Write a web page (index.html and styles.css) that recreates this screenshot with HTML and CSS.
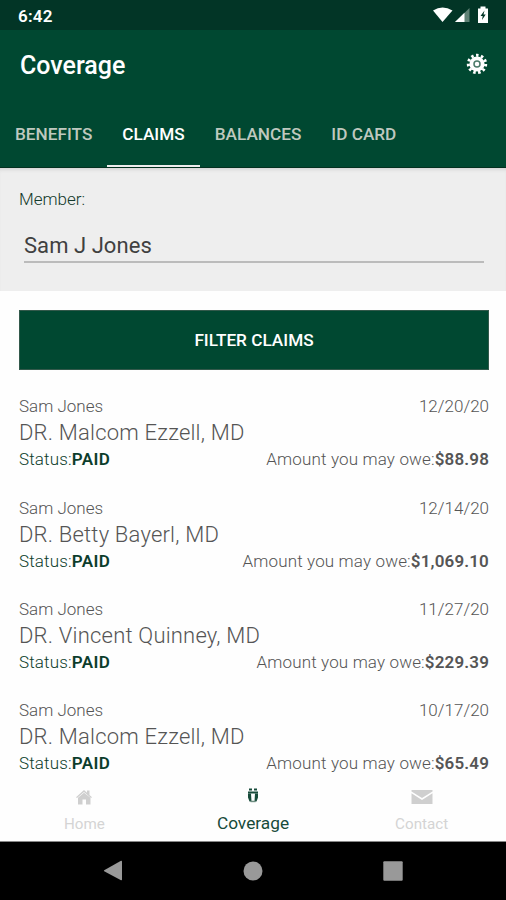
FILE: index.html
```html
<!DOCTYPE html>
<html lang="en">
<head>
    <meta charset="UTF-8">
    <meta name="viewport" content="width=device-width, initial-scale=1.0">
    <title>Coverage</title>
    <link rel="stylesheet" href="styles.css">
</head>
<body>
    <div class="status-bar">
        <span class="time">6:42</span>
        <svg class="status-icons" width="58" height="18" viewBox="0 0 58 18">
            <path d="M1 4.500Q10.500 -1.500 20.500 4.500L10.500 16Z" fill="#fff"/>
            <path d="M37.500 2V16H23Z" fill="#5f8175"/>
            <path d="M32.500 6.800V16H23Z" fill="#fff"/>
            <path d="M46 2.500h2.500V0.500h5v2h2.500V17H46Z" fill="#fff"/>
            <path d="M52.500 4.500l-4 5.500h2.200l-.7 4 3.700-5.500h-2.200Z" fill="#023526"/>
        </svg>
    </div>

    <header class="header">
        <h1>Coverage</h1>
        <svg class="gear" width="22" height="22" viewBox="-11 -11 22 22">
            <circle r="7.600" fill="#fff"/>
            <circle r="8.700" fill="none" stroke="#fff" stroke-width="3" stroke-dasharray="2.500 2.470"/>
            <circle r="3" fill="none" stroke="#4b7a69" stroke-width="1.500"/>
        </svg>
    </header>

    <nav class="tabs">
        <a class="tab">BENEFITS</a>
        <a class="tab active">CLAIMS</a>
        <a class="tab">BALANCES</a>
        <a class="tab">ID CARD</a>
    </nav>

    <section class="member">
        <label class="member-label">Member:</label>
        <div class="member-select">Sam J Jones</div>
    </section>

    <main class="claims">
        <button class="filter">FILTER CLAIMS</button>

        <article class="claim">
            <div class="row"><span>Sam Jones</span><span class="date">12/20/20</span></div>
            <h2>DR. Malcom Ezzell, MD</h2>
            <div class="row"><span class="status">Status:<b>PAID</b></span><span class="amount">Amount you may owe:<b>$88.98</b></span></div>
        </article>
        <article class="claim">
            <div class="row"><span>Sam Jones</span><span class="date">12/14/20</span></div>
            <h2>DR. Betty Bayerl, MD</h2>
            <div class="row"><span class="status">Status:<b>PAID</b></span><span class="amount">Amount you may owe:<b>$1,069.10</b></span></div>
        </article>
        <article class="claim">
            <div class="row"><span>Sam Jones</span><span class="date">11/27/20</span></div>
            <h2>DR. Vincent Quinney, MD</h2>
            <div class="row"><span class="status">Status:<b>PAID</b></span><span class="amount">Amount you may owe:<b>$229.39</b></span></div>
        </article>
        <article class="claim">
            <div class="row"><span>Sam Jones</span><span class="date">10/17/20</span></div>
            <h2>DR. Malcom Ezzell, MD</h2>
            <div class="row"><span class="status">Status:<b>PAID</b></span><span class="amount">Amount you may owe:<b>$65.49</b></span></div>
        </article>
    </main>

    <nav class="bottom-nav">
        <a class="nav-item">
            <svg width="24" height="18" viewBox="0 0 24 18">
                <path d="M4 9.200L12 2l3 2.700V2.500h2.500v4.400L20 9.200l-1 .8-7-6-7 6Z" fill="#cfcfcf"/>
                <path d="M6 9.800l6-5 6.500 5V16.500H14v-5h-3.500v5H6Z" fill="#cfcfcf"/>
            </svg>
            <span>Home</span>
        </a>
        <a class="nav-item current">
            <svg width="24" height="18" viewBox="0 0 24 18">
                <path d="M8 .5h3v2H8ZM13 .5h3v2h-3ZM7 3.500h10v2H7Z" fill="#174b3a"/>
                <path d="M7 5.500h3l.5 8H8.500L7 9.500ZM17 5.500h-3l-.5 8h2l1.500-4Z" fill="#174b3a"/>
                <path d="M9.500 12.700h5v1.500h-5Z" fill="#6d8d80"/>
            </svg>
            <span>Coverage</span>
        </a>
        <a class="nav-item">
            <svg width="24" height="18" viewBox="0 0 24 18">
                <path d="M1.500 2h21v1.500L12 10 1.500 3.500Z" fill="#cfcfcf"/>
                <path d="M1.500 5.300L12 12l10.500-6.700V16h-21Z" fill="#cfcfcf"/>
            </svg>
            <span>Contact</span>
        </a>
    </nav>

    <div class="system-bar">
        <svg width="20" height="22" viewBox="0 0 20 22"><path d="M1.200 10.200L18 .8q1-.3 1 .7v18q0 1-1 .7L1.200 11.200q-.6-.5 0-1Z" fill="#999"/></svg>
        <svg width="20" height="20" viewBox="0 0 20 20"><circle cx="10" cy="10" r="9.500" fill="#999"/></svg>
        <svg width="20" height="20" viewBox="0 0 20 20"><rect x=".3" y=".3" width="19.400" height="19.400" rx="1" fill="#999"/></svg>
    </div>
</body>
</html>
```
FILE: styles.css
```css
* {
    box-sizing: border-box;
}
body {
    margin: 0;
    height: 900px;
    display: flex;
    flex-direction: column;
    overflow: hidden;
    font-family: Roboto, "Liberation Sans", sans-serif;
    background-color: #fefefe;
}
.status-bar {
    flex: none;
    height: 30px;
    padding: 0 16px 0 18px;
    display: flex;
    align-items: center;
    justify-content: space-between;
    background-color: #023526;
    color: #fff;
}
.time {
    font-size: 17px;
    font-weight: 600;
    letter-spacing: 0.2px;
    line-height: 20px;
    padding-top: 2px;
}
.header {
    flex: none;
    height: 72px;
    padding: 0 18px 0 20px;
    display: flex;
    align-items: center;
    justify-content: space-between;
    background-color: #004831;
    color: #fff;
}
.header h1 {
    margin: 0;
    padding-bottom: 1px;
    font-size: 25px;
    font-weight: 500;
}
.gear {
    margin-bottom: 4px;
}
.tabs {
    flex: none;
    height: 66px;
    display: flex;
    background-color: #004831;
    border-bottom: 1px solid #03301f;
}
.tab {
    padding: 0 15px;
    line-height: 65px;
    font-size: 17.2px;
    font-weight: 500;
    color: #bfc8bf;
}
.tab.active {
    color: #fff;
    box-shadow: inset 0 -2px #eee;
}
.member {
    flex: none;
    height: 123px;
    padding: 20px 22px 0 19px;
    background-color: #eee;
    box-shadow: inset 0 4px 4px -3px #ccc;
}
.member-label {
    display: block;
    font-size: 17px;
    font-weight: 300;
    line-height: 22px;
    color: #13392b;
}
.member-select {
    height: 53px;
    margin-left: 5px;
    padding-top: 21px;
    font-size: 22px;
    letter-spacing: 0.05px;
    line-height: 30px;
    color: #404040;
    border-bottom: 2px solid #bbb;
}
.claims {
    flex: 1;
    min-height: 0;
    padding: 19px 17px 0 19px;
}
.filter {
    display: block;
    width: 100%;
    height: 60px;
    border: 1px solid #33594b;
    font-family: inherit;
    font-size: 17.2px;
    font-weight: 500;
    background-color: #004831;
    color: #fff;
}
.claim {
    height: 101.2px;
    font-size: 17px;
    font-weight: 300;
    color: #555;
}
.filter + .claim {
    margin-top: 24.400px;
}
.row {
    display: flex;
    justify-content: space-between;
    line-height: 24px;
}
.claim h2 {
    margin: 0;
    font-size: 22px;
    font-weight: 300;
    letter-spacing: 0.2px;
    line-height: 29px;
}
.claim b {
    font-weight: 600;
}
.status,
.amount {
    letter-spacing: 0.15px;
}
.status {
    color: #0c3d2c;
}
.status b {
    letter-spacing: 0.4px;
}
.bottom-nav {
    flex: none;
    height: 61px;
    display: grid;
    grid-template-columns: repeat(3, 1fr);
    border-bottom: 1px solid #888;
    background-color: #fefefe;
}
.nav-item {
    padding-top: 7px;
    display: flex;
    flex-direction: column;
    align-items: center;
    font-size: 15.2px;
    line-height: 20px;
    color: #d4d4d4;
}
.nav-item span {
    margin-top: 8px;
}
.nav-item.current {
    font-size: 17.3px;
    color: #174b3a;
}
.nav-item.current span {
    margin-top: 7px;
}
.system-bar {
    flex: none;
    height: 58px;
    padding: 0 103px;
    display: flex;
    align-items: center;
    justify-content: space-between;
    background-color: #000;
}
```
